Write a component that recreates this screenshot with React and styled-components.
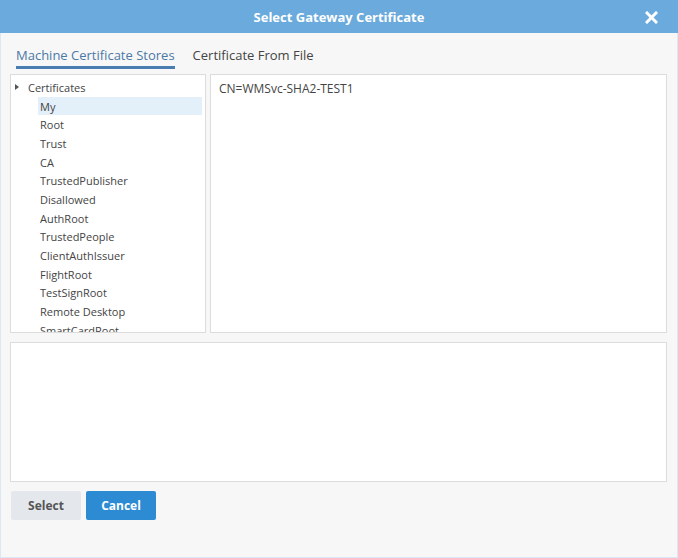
import React from "react";
import styled, { createGlobalStyle } from "styled-components";

const Global = createGlobalStyle`
    html, body {
        margin: 0;
        padding: 0;
        background: #ffffff;
    }
    body {
        font-family: "Open Sans", "Noto Sans", sans-serif;
        color: #444;
    }
`;

const Dialog = styled.div`
    width: 678px;
    height: 558px;
    box-sizing: border-box;
    border: 1px solid #dae8f5;
    border-top: none;
    background: #f7f7f7;
    display: flex;
    flex-direction: column;
`;
const Header = styled.div`
    position: relative;
    height: 33px;
    margin: 0 -1px;
    background: #6aaadc;
    color: #fff;
    display: flex;
    align-items: center;
    justify-content: center;
    font-size: 13px;
    font-weight: 700;
`;
const Close = styled.button`
    position: absolute;
    right: 20px;
    top: 11px;
    width: 13px;
    height: 13px;
    padding: 0;
    border: none;
    background: none;
    display: flex;
`;
const Body = styled.div`
    flex: 1;
    padding: 0 10px 0 9px;
    display: flex;
    flex-direction: column;
`;
const Tabs = styled.div`
    display: flex;
    gap: 18px;
    padding: 13px 0 0 6px;
    height: 28px;
`;
const Tab = styled.div`
    font-size: 13px;
    line-height: 18px;
    color: ${p => (p.active ? "#4b79a6" : "#444")};
    border-bottom: 3px solid ${p => (p.active ? "#4a7db0" : "transparent")};
    height: 20px;
    padding-top: 0;
`;
const Top = styled.div`
    display: grid;
    grid-template-columns: 196px 1fr;
    gap: 4px;
    height: 259px;
`;
const Panel = styled.div`
    box-sizing: border-box;
    background: #fff;
    border: 1px solid #dcdcdc;
    overflow: hidden;
    height: ${p => p.h || "auto"};
`;
const Tree = styled.ul`
    list-style: none;
    margin: 0;
    padding: 3px 3px 0 0;
`;
const Node = styled.li`
    display: flex;
    align-items: center;
    height: 18.7px;
    font-size: 11px;
    color: #444;
    padding-left: ${p => p.indent}px;
    margin-left: ${p => (p.child ? 27 : 0)}px;
    background: ${p => (p.selected ? "#e3f0fa" : "transparent")};
`;
const Arrow = styled.span`
    width: 0;
    height: 0;
    border-top: 3.5px solid transparent;
    border-bottom: 3.5px solid transparent;
    border-left: 4px solid #555;
    margin: 0 9px 0 4px;
`;
const CertText = styled.div`
    padding: 5px 8px;
    font-size: 12px;
    color: #444;
`;
const Bottom = styled(Panel)`
    margin-top: 9px;
`;
const Buttons = styled.div`
    display: flex;
    gap: 5px;
    margin-top: 9px;
    padding-left: 1px;
`;
const Button = styled.button`
    width: 70px;
    height: 29px;
    border: none;
    border-radius: 2px;
    font-family: "Open Sans", "Noto Sans", sans-serif;
    font-size: 12px;
    font-weight: 700;
    background: ${p => (p.primary ? "#2d8bd3" : "#e4e7ec")};
    color: ${p => (p.primary ? "#fff" : "#555")};
`;

const stores = [
    "My", "Root", "Trust", "CA", "TrustedPublisher", "Disallowed", "AuthRoot",
    "TrustedPeople", "ClientAuthIssuer", "FlightRoot", "TestSignRoot",
    "Remote Desktop", "SmartCardRoot", "TrustedDevices",
];

export default function App() {
    return <>
        <Global />
        <Dialog>
            <Header>
                Select Gateway Certificate
                <Close title="Close">
                    <svg width="13" height="13" viewBox="0 0 13 13">
                        <path d="M2 2 L11 11 M11 2 L2 11" stroke="#fff" strokeWidth="3" strokeLinecap="square" />
                    </svg>
                </Close>
            </Header>
            <Body>
                <Tabs>
                    <Tab active>Machine Certificate Stores</Tab>
                    <Tab>Certificate From File</Tab>
                </Tabs>
                <Top>
                    <Panel>
                        <Tree>
                            <Node indent={0}><Arrow />Certificates</Node>
                            {stores.map(s => <Node key={s} child indent={2} selected={s === "My"}>{s}</Node>)}
                        </Tree>
                    </Panel>
                    <Panel>
                        <CertText>CN=WMSvc-SHA2-TEST1</CertText>
                    </Panel>
                </Top>
                <Bottom h="140px" />
                <Buttons>
                    <Button>Select</Button>
                    <Button primary>Cancel</Button>
                </Buttons>
            </Body>
        </Dialog>
    </>;
}
